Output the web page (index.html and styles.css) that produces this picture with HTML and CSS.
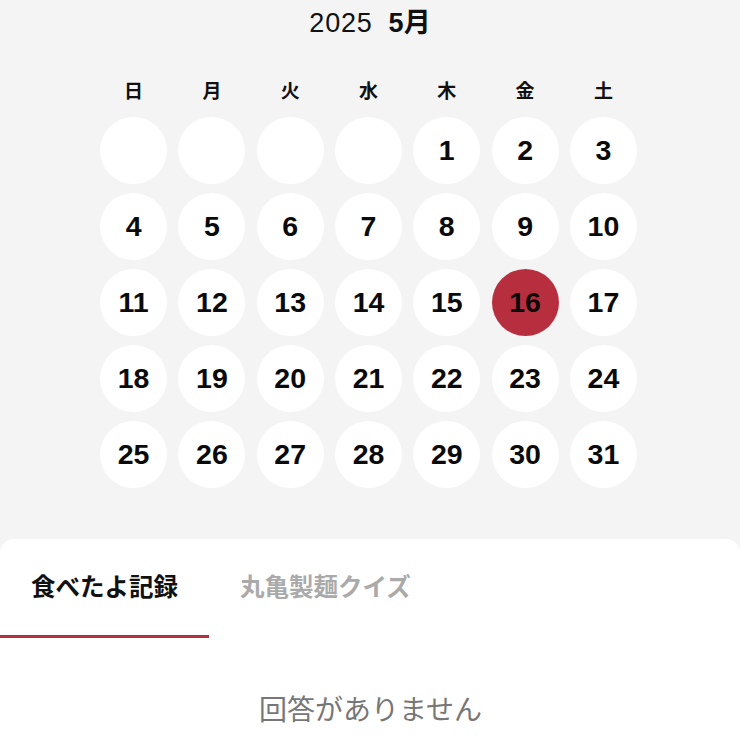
FILE: index.html
```html
<!DOCTYPE html>
<html lang="ja">
<head>
<meta charset="utf-8">
<link rel="stylesheet" href="styles.css">
</head>
<body>
<div class="page">
  <div class="month-header"><span class="year">2025</span><span class="month">5月</span></div>
  <div class="calendar">
    <div class="wd">日</div><div class="wd">月</div><div class="wd">火</div><div class="wd">水</div><div class="wd">木</div><div class="wd">金</div><div class="wd">土</div>
    <div class="day"></div><div class="day"></div><div class="day"></div><div class="day"></div>
    <div class="day">1</div><div class="day">2</div><div class="day">3</div>
    <div class="day">4</div><div class="day">5</div><div class="day">6</div><div class="day">7</div><div class="day">8</div><div class="day">9</div><div class="day">10</div>
    <div class="day">11</div><div class="day">12</div><div class="day">13</div><div class="day">14</div><div class="day">15</div><div class="day selected">16</div><div class="day">17</div>
    <div class="day">18</div><div class="day">19</div><div class="day">20</div><div class="day">21</div><div class="day">22</div><div class="day">23</div><div class="day">24</div>
    <div class="day">25</div><div class="day">26</div><div class="day">27</div><div class="day">28</div><div class="day">29</div><div class="day">30</div><div class="day">31</div>
  </div>
  <div class="panel">
    <div class="tabs">
      <div class="tab active">食べたよ記録</div>
      <div class="tab">丸亀製麺クイズ</div>
    </div>
    <div class="empty">回答がありません</div>
  </div>
</div>
</body>
</html>
```
FILE: styles.css
```css
html, body {
  margin: 0;
  padding: 0;
  background: #f4f4f4;
}
body {
  font-family: "Liberation Sans", "Noto Sans CJK JP", sans-serif;
  color: #111;
  width: 740px;
  height: 740px;
  overflow: hidden;
}
.page {
  display: flex;
  flex-direction: column;
}
.month-header {
  display: flex;
  justify-content: center;
  align-items: baseline;
  gap: 16px;
  padding-top: 4px;
  height: 38px;
  line-height: 38px;
}
.year {
  font-size: 27px;
  font-weight: 400;
  letter-spacing: 0.8px;
}
.month {
  font-size: 27px;
  font-weight: 700;
}
.calendar {
  display: grid;
  grid-template-columns: repeat(7, 67px);
  column-gap: 11.3px;
  row-gap: 9px;
  justify-content: center;
  margin-top: 37px;
  padding-right: 3px;
}
.wd {
  font-family: "Noto Sans CJK JP", sans-serif;
  font-size: 19px;
  font-weight: 700;
  text-align: center;
  line-height: 22px;
  margin-bottom: 7px;
}
.day {
  width: 67px;
  height: 67px;
  border-radius: 50%;
  background: #fff;
  display: flex;
  align-items: center;
  justify-content: center;
  font-size: 28.5px;
  font-weight: 700;
  color: #0a0a0a;
}
.day.selected {
  background: #b72f3f;
}
.panel {
  margin-top: 51px;
  background: #fff;
  border-radius: 14px 14px 0 0;
  height: 210px;
}
.tabs {
  display: flex;
}
.tab {
  font-family: "Noto Sans CJK JP", sans-serif;
  font-size: 24.5px;
  font-weight: 700;
  color: #aaa;
  padding: 30px 31px 33px;
  border-bottom: 3px solid transparent;
  line-height: 33px;
}
.tab.active {
  color: #111;
  border-bottom-color: #b72f3f;
}
.empty {
  font-family: "Noto Sans CJK JP", sans-serif;
  text-align: center;
  font-size: 28px;
  color: #777;
  margin-top: 50px;
  padding-left: 1px;
}
```
